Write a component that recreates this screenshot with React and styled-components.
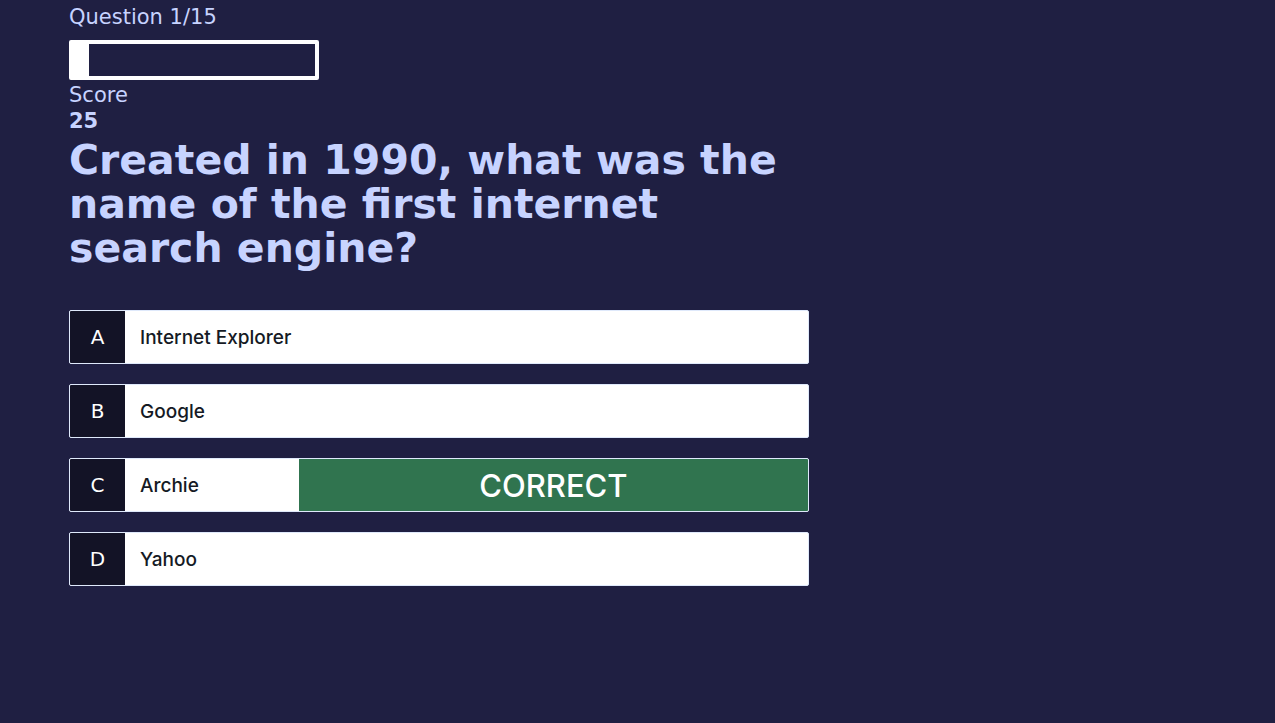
import React from "react";
import styled, { createGlobalStyle } from "styled-components";

const display = `"DejaVu Sans", Verdana, sans-serif`;
const body = `Inter, "Open Sans", sans-serif`;

const GlobalStyle = createGlobalStyle`
  *, *::before, *::after { box-sizing: border-box; }
  body {
    margin: 0;
    background: #1f1f42;
    color: #c7d3ff;
    font-family: ${display};
  }
`;

const Page = styled.main`
  max-width: 878px;
  padding: 4px 69px 40px;
`;

const Hud = styled.header`
  display: flex;
  flex-direction: column;
  align-items: flex-start;
`;

const HudLabel = styled.p`
  margin: 0;
  font-size: 21px;
  line-height: 26px;
`;

const Progress = styled.div`
  width: 250px;
  max-width: 100%;
  height: 40px;
  margin: 10px 0 2px;
  border: 4px solid #fff;
  border-radius: 2px;
`;

const ProgressFill = styled.div`
  height: 100%;
  background: #fff;
`;

const Score = styled.p`
  margin: 0;
  font-size: 21px;
  font-weight: 700;
  line-height: 26px;
`;

const Question = styled.h1`
  margin: 4px 0 40px;
  font-size: 41px;
  font-weight: 700;
  line-height: 44px;
`;

const Choices = styled.ul`
  display: flex;
  flex-direction: column;
  gap: 20px;
  margin: 0;
  padding: 0;
  list-style: none;
`;

const Choice = styled.button`
  display: flex;
  align-items: stretch;
  width: 100%;
  height: 54px;
  padding: 0;
  border: 1px solid #dfe9fb;
  border-radius: 2px;
  overflow: hidden;
  background: #fff;
  color: #151a24;
  font-family: ${body};
  text-align: left;
  cursor: pointer;
`;

const Prefix = styled.span`
  display: flex;
  flex: 0 0 55px;
  align-items: center;
  justify-content: center;
  background: #131326;
  color: #fff;
  font-family: ${display};
  font-size: 20px;
`;

const Answer = styled.span`
  display: flex;
  flex: 1 1 0;
  align-items: center;
  padding: 0 15px;
  font-size: 19px;
  font-weight: 500;
`;

const Verdict = styled.span`
  display: flex;
  flex: 0 0 69%;
  align-items: center;
  justify-content: center;
  background: #30744f;
  color: #fff;
  font-size: 31px;
  font-weight: 500;
`;

const question = "Created in 1990, what was the name of the first internet search engine?";

const choices = [
  { prefix: "A", text: "Internet Explorer" },
  { prefix: "B", text: "Google" },
  { prefix: "C", text: "Archie", verdict: "CORRECT" },
  { prefix: "D", text: "Yahoo" },
];

const current = 1;
const total = 15;

export default function App() {
  return (
    <>
      <GlobalStyle />
      <Page>
        <Hud>
          <HudLabel id="progress-label">{`Question ${current}/${total}`}</HudLabel>
          <Progress
            role="progressbar"
            aria-labelledby="progress-label"
            aria-valuemin={0}
            aria-valuemax={total}
            aria-valuenow={current}
          >
            <ProgressFill style={{ width: `${(current / total) * 100}%` }} />
          </Progress>
          <HudLabel>Score</HudLabel>
          <Score>25</Score>
        </Hud>
        <Question>{question}</Question>
        <Choices>
          {choices.map(({ prefix, text, verdict }) => (
            <li key={prefix}>
              <Choice type="button">
                <Prefix>{prefix}</Prefix>
                <Answer>{text}</Answer>
                {verdict && <Verdict>{verdict}</Verdict>}
              </Choice>
            </li>
          ))}
        </Choices>
      </Page>
    </>
  );
}
